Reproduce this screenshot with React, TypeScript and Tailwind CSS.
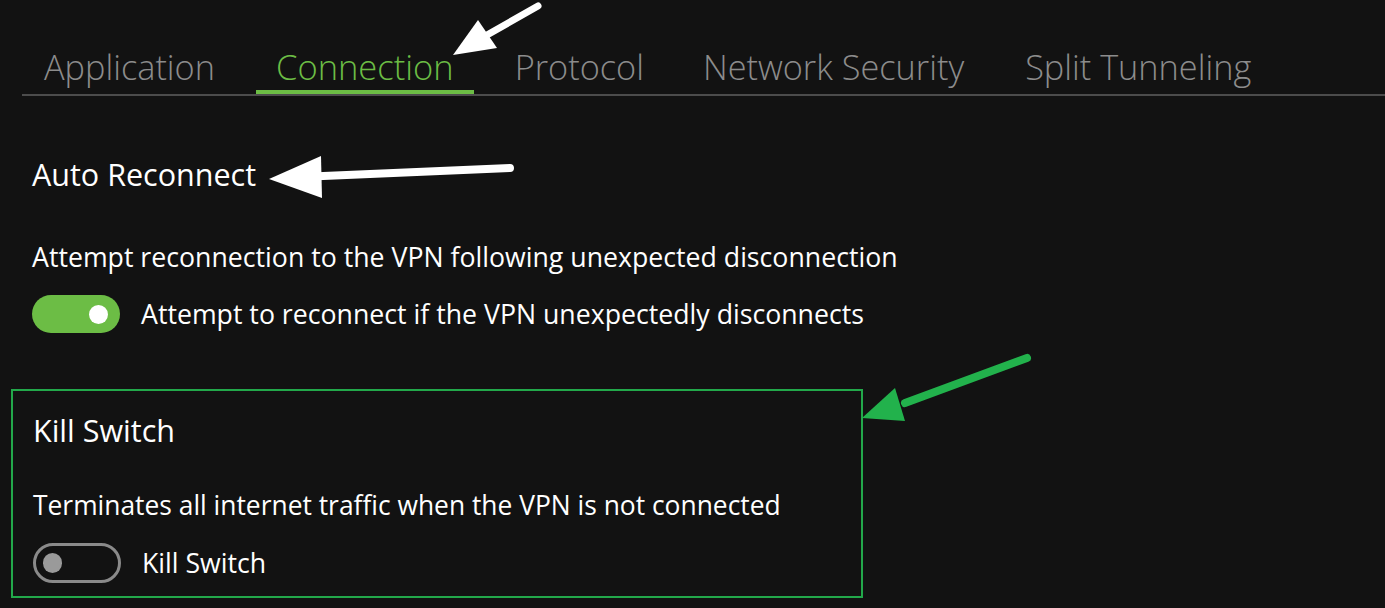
import React from "react";

const tabs = ["Application", "Connection", "Protocol", "Network Security", "Split Tunneling"];

const Toggle: React.FC<{ on: boolean }> = ({ on }) =>
  on ? (
    <div className="flex h-[38px] w-[88px] shrink-0 items-center justify-end rounded-full bg-[#6cbd45] pr-[12px]">
      <div className="h-[19px] w-[19px] rounded-full bg-white" />
    </div>
  ) : (
    <div className="flex h-[40px] w-[88px] shrink-0 items-center rounded-full border-[3px] border-[#8a8a8a] pl-[7px]">
      <div className="h-[20px] w-[19px] rounded-full bg-[#9a9a9a]" />
    </div>
  );

export default function App() {
  return (
    <div
      className="relative h-[608px] w-[1385px] overflow-hidden bg-[#121212] text-white"
      style={{ fontFamily: '"Open Sans", "Noto Sans", sans-serif' }}
    >
      {/* tab bar */}
      <div className="ml-[22px] flex h-[96px] items-end border-b-2 border-[#4c4c4c] pl-[22px]">
        {tabs.map((t) => (
          <div
            key={t}
            className={
              t === "Connection"
                ? "mr-[41px] -ml-[20px] border-b-4 border-[#6cbd45] px-[20px] text-[34.5px] font-light leading-[46px] text-[#6cbd45]"
                : t === "Protocol"
                ? "mr-[59px] border-b-4 border-transparent text-[34.3px] font-light leading-[46px] text-[#8c8c8c]"
                : "mr-[61px] border-b-4 border-transparent text-[34.3px] font-light leading-[46px] text-[#8c8c8c]"
            }
          >
            {t}
          </div>
        ))}
      </div>

      {/* auto reconnect */}
      <div className="pl-[32px] pt-[58px]">
        <div className="text-[30.5px] leading-[40px]">Auto Reconnect</div>
        <div className="mt-[45px] text-[26.7px] leading-[36px]">
          Attempt reconnection to the VPN following unexpected disconnection
        </div>
        <div className="mt-[20px] flex items-center gap-[21px]">
          <Toggle on />
          <span className="text-[26.7px] leading-[36px]">Attempt to reconnect if the VPN unexpectedly disconnects</span>
        </div>
      </div>

      {/* kill switch */}
      <div className="ml-[11px] mt-[56px] h-[209px] w-[852px] border-2 border-[#22a84a] pl-[20px] pt-[19px]">
        <div className="text-[30.5px] leading-[40px]">Kill Switch</div>
        <div className="mt-[37px] text-[26.4px] leading-[36px]">
          Terminates all internet traffic when the VPN is not connected
        </div>
        <div className="mt-[20px] flex items-center gap-[21px]">
          <Toggle on={false} />
          <span className="text-[26.7px] leading-[36px]">Kill Switch</span>
        </div>
      </div>

      {/* annotation arrows */}
      <svg className="pointer-events-none absolute left-0 top-0" width="1385" height="608">
        <line x1="538" y1="6" x2="487" y2="35" stroke="white" strokeWidth="7" strokeLinecap="round" />
        <polygon points="453,55 478,20 497,48" fill="white" />
        <line x1="510" y1="168" x2="300" y2="177" stroke="white" strokeWidth="8" strokeLinecap="round" />
        <polygon points="269,179 321,156 322,198" fill="white" />
        <line x1="1027" y1="358" x2="905" y2="403" stroke="#22b24c" strokeWidth="8" strokeLinecap="round" />
        <polygon points="862,418 895,388 905,421" fill="#22b24c" />
      </svg>
    </div>
  );
}
